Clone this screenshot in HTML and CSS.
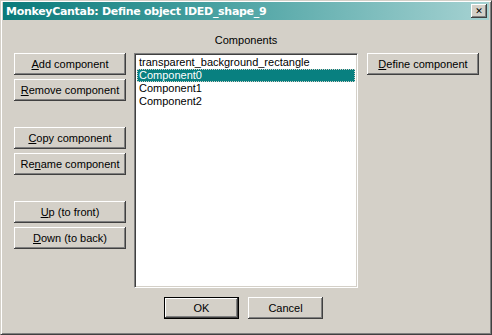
FILE: index.html
```html
<!DOCTYPE html>
<html lang="en">
<head>
    <meta charset="UTF-8">
    <title>MonkeyCantab: Define object IDED_shape_9</title>
    <link rel="stylesheet" href="styles.css">
</head>
<body>
    <div class="window">
        <div class="titlebar">
            <span class="title">MonkeyCantab: Define object IDED_shape_9</span>
            <button class="close-btn">&#x2715;</button>
        </div>

        <div class="dialog">
            <div class="side">
                <div class="group">
                    <button class="btn"><u>A</u>dd component</button>
                    <button class="btn"><u>R</u>emove component</button>
                </div>
                <div class="group">
                    <button class="btn"><u>C</u>opy component</button>
                    <button class="btn">Re<u>n</u>ame component</button>
                </div>
                <div class="group">
                    <button class="btn"><u>U</u>p (to front)</button>
                    <button class="btn"><u>D</u>own (to back)</button>
                </div>
            </div>

            <div class="middle">
                <div class="label">Components</div>
                <ul class="listbox">
                    <li>transparent_background_rectangle</li>
                    <li class="selected">Component0</li>
                    <li>Component1</li>
                    <li>Component2</li>
                </ul>
            </div>

            <div class="side right">
                <button class="btn"><u>D</u>efine component</button>
            </div>
        </div>

        <div class="footer">
            <button class="btn small default">OK</button>
            <button class="btn small">Cancel</button>
        </div>
    </div>
</body>
</html>
```

FILE: styles.css
```css
* {
    margin: 0;
    padding: 0;
    box-sizing: border-box;
}

body {
    background: #d4d0c8;
    font-family: 'Liberation Sans', Arial, sans-serif;
    font-size: 11px;
    color: #000;
}

.window {
    width: 492px;
    height: 335px;
    background: #d4d0c8;
    border-top: 1px solid #d4d0c8;
    border-left: 1px solid #d4d0c8;
    border-right: 1px solid #404040;
    border-bottom: 1px solid #404040;
    box-shadow: inset 1px 1px #fff, inset -1px -1px #808080;
    padding: 1px 2px 2px 2px;
    display: flex;
    flex-direction: column;
}

.titlebar {
    height: 18px;
    background: linear-gradient(to right, #0a7a7a 0%, #4aa2a2 45%, #a6d2d2 100%);
    display: flex;
    align-items: center;
    justify-content: space-between;
    padding: 0 2px 0 3px;
}

.title {
    color: #fff;
    font-family: 'DejaVu Sans', sans-serif;
    font-weight: bold;
    font-size: 11px;
    letter-spacing: -0.3px;
}

.close-btn {
    width: 16px;
    height: 14px;
    background: #d4d0c8;
    border: none;
    box-shadow: inset -1px -1px #404040, inset 1px 1px #fff, inset -2px -2px #808080;
    font-size: 9px;
    font-weight: bold;
    line-height: 14px;
    font-family: 'DejaVu Sans', sans-serif;
    color: #000;
}

.dialog {
    display: flex;
    padding: 14px 0 0 11px;
    gap: 8px;
}

.side {
    width: 112px;
    padding-top: 19px;
    display: flex;
    flex-direction: column;
    gap: 26px;
}

.group {
    display: flex;
    flex-direction: column;
    gap: 4px;
}

.right {
    margin-left: 1px;
}

.btn {
    width: 112px;
    height: 22px;
    background: #d4d0c8;
    border: none;
    box-shadow: inset -1px -1px #404040, inset 1px 1px #fff, inset -2px -2px #808080;
    font-family: 'Liberation Sans', Arial, sans-serif;
    font-size: 11px;
    color: #000;
}

.middle {
    width: 224px;
    display: flex;
    flex-direction: column;
}

.label {
    height: 19px;
    text-align: center;
    line-height: 13px;
}

.listbox {
    list-style: none;
    height: 235px;
    background: #fff;
    border-top: 1px solid #808080;
    border-left: 1px solid #808080;
    border-right: 1px solid #fff;
    border-bottom: 1px solid #fff;
    box-shadow: inset 1px 1px #404040, inset -1px -1px #d4d0c8;
    padding: 2px 2px;
}

.listbox li {
    height: 13px;
    line-height: 13px;
    padding-left: 2px;
    white-space: nowrap;
}

.listbox .selected {
    background: #088080;
    color: #fff;
    outline: 1px dotted #d4d0c8;
    outline-offset: -1px;
}

.footer {
    display: flex;
    gap: 9px;
    padding: 9px 0 0 161px;
}

.small {
    width: 75px;
}

.default {
    border: 1px solid #000;
}
```
